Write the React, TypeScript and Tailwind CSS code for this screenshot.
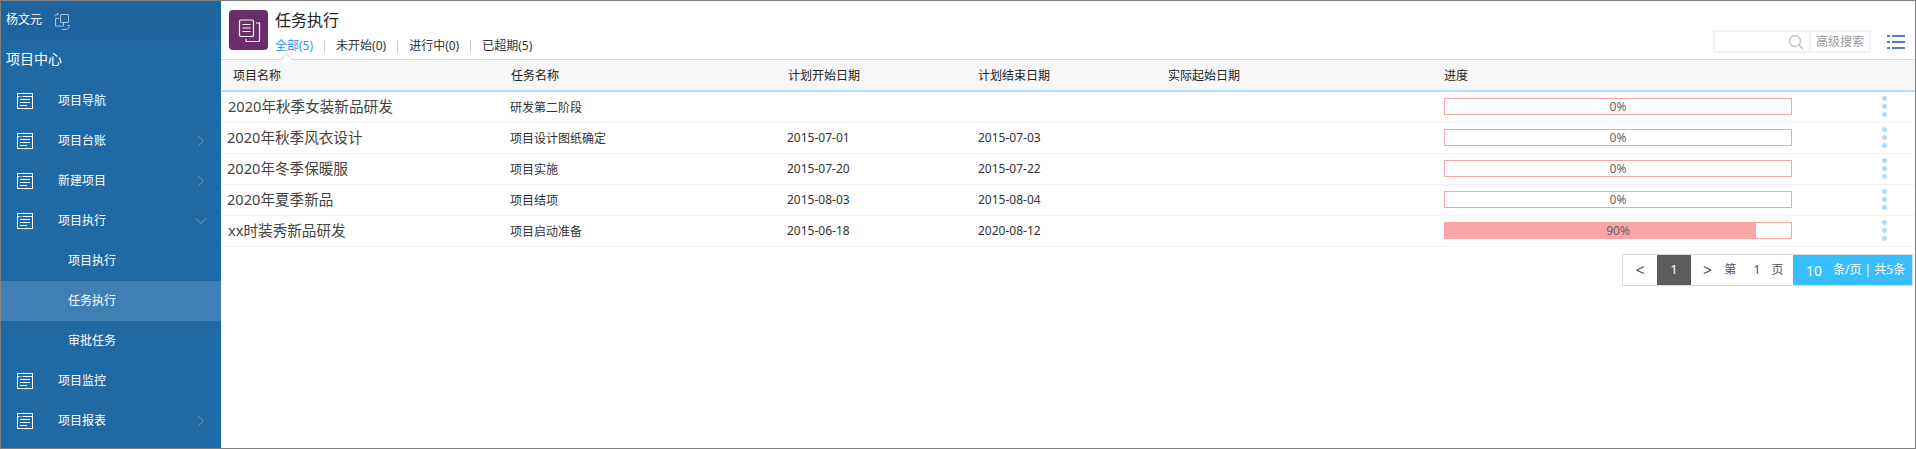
import { ChevronDown, ChevronRight } from 'lucide-react'

const fontStack = "font-['Noto_Sans','Noto_Sans_CJK_SC',sans-serif]"

interface TaskRow {
  project: string
  task: string
  start: string
  end: string
  progress: number
  shift?: boolean
}

const rows: TaskRow[] = [
  { project: '2020年秋季女装新品研发', task: '研发第二阶段', start: '', end: '', progress: 0, shift: true },
  { project: '2020年秋季风衣设计', task: '项目设计图纸确定', start: '2015-07-01', end: '2015-07-03', progress: 0 },
  { project: '2020年冬季保暖服', task: '项目实施', start: '2015-07-20', end: '2015-07-22', progress: 0 },
  { project: '2020年夏季新品', task: '项目结项', start: '2015-08-03', end: '2015-08-04', progress: 0 },
  { project: 'xx时装秀新品研发', task: '项目启动准备', start: '2015-06-18', end: '2020-08-12', progress: 90, shift: true },
]

const menu = [
  { label: '项目导航' },
  { label: '项目台账', arrow: 'right' },
  { label: '新建项目', arrow: 'right' },
  { label: '项目执行', arrow: 'down' },
  { label: '项目执行', sub: true },
  { label: '任务执行', sub: true, active: true },
  { label: '审批任务', sub: true },
  { label: '项目监控' },
  { label: '项目报表', arrow: 'right' },
]

function WindowIcon() {
  return (
    <svg width="16" height="16" viewBox="0 0 16 16" fill="none" stroke="#fff" strokeWidth="1">
      <rect x="0.5" y="0.5" width="15" height="15" />
      <path d="M1 3.5h1.5M3.5 3.5h1M5.5 3.5h9.5M3 6.5h10M3 9.5h10M3 12.5h7" />
    </svg>
  )
}

function SwitchIcon() {
  return (
    <svg width="16" height="18" viewBox="0 0 16 18" fill="none" stroke="#a9c3d9" strokeWidth="1">
      <rect x="6.5" y="1.5" width="8" height="8" rx="0.5" />
      <path d="M5 5.5H1.5v7.5h8v-3" />
      <path d="M1 3.5c0-1.5 1-2.5 3-2.5M3 0l1.5 1L3 2.5" />
      <path d="M15 13.5c0 2-1.5 3-4 3h-3M13.5 13l1.5-1 1 1.500" />
    </svg>
  )
}

function DocsIcon() {
  return (
    <svg width="24" height="24" viewBox="0 0 24 24" fill="none" stroke="#fff" strokeWidth="1.200">
      <rect x="2.500" y="2" width="14" height="16.500" rx="1.500" />
      <path d="M5.500 6.500h8M5.500 10h8M5.500 13.500h8" />
      <path d="M19 5h3.500v17.500a1 1 0 0 1-1 1H9v-2.500" />
    </svg>
  )
}

function Sidebar() {
  return (
    <aside className="flex w-[220px] shrink-0 flex-col bg-[#1f69a5] text-white">
      <div className="flex h-[39px] items-center bg-[#1e649f] pb-[2px] pl-[5px] text-[12px]">
        <span>杨文元</span>
        <span className="ml-[12px] mt-[4px]">
          <SwitchIcon />
        </span>
      </div>
      <div className="flex h-[41px] items-center pb-[4px] pl-[5px] text-[14px]">项目中心</div>
      {menu.map((item, i) => (
        <div
          key={i}
          className={`flex h-[40px] items-center text-[12px] ${item.active ? 'bg-[#417eb3]' : ''} ${item.sub ? 'pl-[67px]' : 'pl-[16px]'}`}
        >
          {!item.sub && <WindowIcon />}
          <span className={item.sub ? '' : 'ml-[25px]'}>{item.label}</span>
          {item.arrow === 'right' && (
            <ChevronRight size={18} strokeWidth={1} className="ml-auto mr-[11px] text-[#8fb4d3]" />
          )}
          {item.arrow === 'down' && (
            <ChevronDown size={20} strokeWidth={1} className="ml-auto mr-[10px] text-[#8fb4d3]" />
          )}
        </div>
      ))}
    </aside>
  )
}

function Tabs() {
  const tabs = ['全部(5)', '未开始(0)', '进行中(0)', '已超期(5)']
  return (
    <div className="mt-[5px] flex items-center text-[12px] leading-[20px] text-[#333]">
      {tabs.map((t, i) => (
        <div key={t} className="flex items-center">
          {i > 0 && <div className="mx-[11px] h-[13px] w-px bg-[#cfcfcf]" />}
          <span className={i === 0 ? 'text-[#2b95f0]' : ''}>{t}</span>
        </div>
      ))}
    </div>
  )
}

function Header() {
  return (
    <div className="relative flex h-[59px] items-start border-b border-[#d9d9d9] pl-[8px] pt-[9px]">
      <div className="flex h-[40px] w-[39px] items-center justify-center rounded-[4px] bg-[#6b2c6b]">
        <DocsIcon />
      </div>
      <div className="ml-[7px] flex flex-col">
        <div className="-mt-[1px] text-[16px] leading-[22px] text-[#222]">任务执行</div>
        <Tabs />
      </div>
      <div className="ml-auto mr-[10px] mt-[20px] flex items-center">
        <div className="flex h-[23px] w-[98px] items-center justify-end border-2 border-[#f3f3f3] pr-[5px]">
          <svg width="16" height="16" viewBox="0 0 16 16" fill="none" stroke="#bdbdbd" strokeWidth="1.300">
            <circle cx="7" cy="7" r="5.500" />
            <path d="M11 11l4 4" />
          </svg>
        </div>
        <div className="flex h-[23px] w-[60px] items-center justify-center border-2 border-l-0 border-[#f3f3f3] text-[12px] text-[#999]">
          高级搜索
        </div>
        <svg className="ml-[16px]" width="18" height="14" viewBox="0 0 18 14" fill="#4f81bd">
          <rect x="0" y="0" width="3" height="2" />
          <rect x="5" y="0" width="13" height="2" />
          <rect x="0" y="6" width="3" height="2" />
          <rect x="5" y="6" width="13" height="2" />
          <rect x="0" y="12" width="3" height="2" />
          <rect x="5" y="12" width="13" height="2" />
        </svg>
      </div>
      {/* notch under the active tab */}
      <div className="absolute bottom-[-5px] left-[61px] h-[9px] w-[9px] rotate-45 border-l border-t border-[#d9d9d9] bg-white" />
    </div>
  )
}

function Progress({ value }: { value: number }) {
  return (
    <div className="relative flex h-[17px] w-[348px] items-center justify-center border border-[#faa6a6] bg-white text-[12px] text-[#666]">
      <div className="absolute inset-y-0 left-0 bg-[#faa6a6]" style={{ width: `${value}%` }} />
      <span className="relative">{value}%</span>
    </div>
  )
}

function Table() {
  return (
    <div>
      <div className="grid h-[32px] grid-cols-[278px_277px_190px_190px_276px_1fr] items-center border-b-2 border-[#b5dffb] bg-[#f7f7f7] pl-[12px] pt-[1px] text-[12px] text-[#222]">
        <div>项目名称</div>
        <div>任务名称</div>
        <div>计划开始日期</div>
        <div>计划结束日期</div>
        <div>实际起始日期</div>
        <div>进度</div>
      </div>
      {rows.map((row) => (
        <div
          key={row.project}
          className="grid h-[31px] grid-cols-[283px_277px_191px_189px_277px_348px_1fr] items-start border-b border-[#f2f2f2] pl-[6px] text-[12px] text-[#333]"
        >
          <div className={`text-[14.600px] leading-[29px] text-[#444] ${row.shift ? 'pl-[1px]' : ''}`}>{row.project}</div>
          <div className="leading-[31px]">{row.task}</div>
          <div className="leading-[29px]">{row.start}</div>
          <div className="leading-[29px]">{row.end}</div>
          <div />
          <div className="pt-[6px]">
            <Progress value={row.progress} />
          </div>
          <div className="flex flex-col gap-[3px] pl-[90px] pt-[4px]">
            <div className="h-[5px] w-[5px] rounded-full bg-[#b3dcfb]" />
            <div className="h-[5px] w-[5px] rounded-full bg-[#b3dcfb]" />
            <div className="h-[5px] w-[5px] rounded-full bg-[#b3dcfb]" />
          </div>
        </div>
      ))}
    </div>
  )
}

function Pagination() {
  return (
    <div className="mr-[2px] mt-[7px] flex justify-end">
      <div className="flex h-[32px] w-[291px] items-stretch border border-[#d9d9d9] text-[13px] text-[#555]">
        <div className="flex w-[34px] items-center justify-center text-[16px]">&lt;</div>
        <div className="flex w-[34px] items-center justify-center bg-[#5c5c5c] text-white">1</div>
        <div className="flex flex-1 items-center pl-[12px] text-[12px]">
          <span className="text-[16px]">&gt;</span>
          <span className="ml-[12px]">第</span>
          <span className="ml-[17px] text-[13px]">1</span>
          <span className="ml-[11px]">页</span>
        </div>
        <div className="flex w-[119px] items-center bg-[#38bdff] pl-[13px] text-[12px] text-white">
          <span className="text-[14px]">10</span>
          <span className="ml-[11px]">条/页 | 共5条</span>
        </div>
      </div>
    </div>
  )
}

export default function App() {
  return (
    <div className={`flex h-[449px] w-[1916px] overflow-hidden border border-[#808080] bg-white ${fontStack}`}>
      <Sidebar />
      <main className="flex-1">
        <Header />
        <Table />
        <Pagination />
      </main>
    </div>
  )
}
